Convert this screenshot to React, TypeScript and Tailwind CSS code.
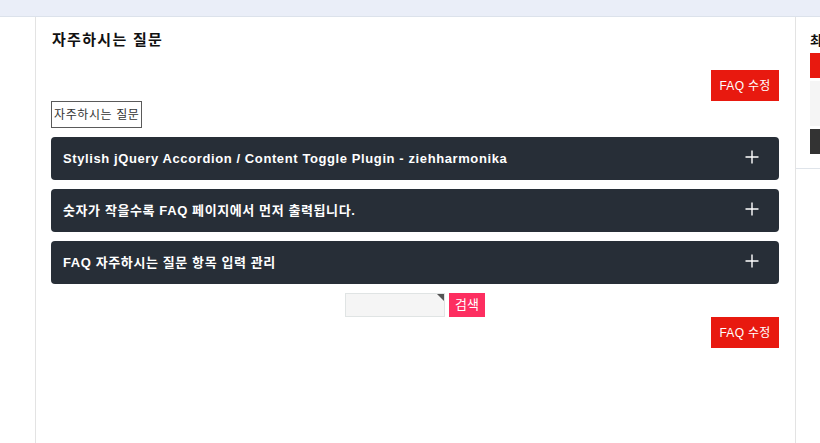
import React from 'react';

const faqs = [
  'Stylish jQuery Accordion / Content Toggle Plugin - ziehharmonika',
  '숫자가 작을수록 FAQ 페이지에서 먼저 출력됩니다.',
  'FAQ 자주하시는 질문 항목 입력 관리',
];

const font = { fontFamily: '"Liberation Sans", "Noto Sans CJK KR", sans-serif' };

function PlusIcon() {
  return (
    <svg width="14" height="14" viewBox="0 0 14 14" className="shrink-0">
      <path d="M7 0.5V13.5M0.5 7H13.5" stroke="#ffffff" strokeWidth="1.4" fill="none" />
    </svg>
  );
}

function EditButton() {
  return (
    <div className="flex justify-end">
      <button className="h-[31px] w-[68px] bg-[#e8190f] text-[12px] tracking-[0.3px] text-white">
        FAQ 수정
      </button>
    </div>
  );
}

export default function App() {
  return (
    <div className="flex min-h-screen flex-col bg-white text-[#111]" style={font}>
      {/* Top bar */}
      <div className="h-[17px] shrink-0 border-b border-[#dce2eb] bg-[#eaeef8]" />

      <div className="flex flex-1">
        {/* Left rail */}
        <div className="w-[36px] shrink-0 border-r border-[#e3e3e3]" />

        {/* Main */}
        <main className="w-[760px] shrink-0 border-r border-[#e3e3e3] px-[15px] pr-[16px] pt-[13px]">
          <h1 className="pl-[1px] text-[15px] font-bold leading-[20px] tracking-[1.3px] text-[#111]">
            자주하시는 질문
          </h1>

          <div className="mt-[20px]">
            <EditButton />
          </div>

          <div className="flex">
            <div className="flex h-[27px] items-center border border-[#5a5a5a] px-[2px] text-[12px] tracking-[0.6px] text-[#333]">
              자주하시는 질문
            </div>
          </div>

          {/* Accordion */}
          <div className="mt-[9px] flex flex-col gap-[9px]">
            {faqs.map((q) => (
              <div
                key={q}
                className="flex h-[43px] items-center justify-between rounded-[4px] bg-[#272e37] pl-[12px] pr-[20px]"
              >
                <span className="text-[13px] font-bold tracking-[0.6px] text-white">{q}</span>
                <span className="-mt-[4px]">
                  <PlusIcon />
                </span>
              </div>
            ))}
          </div>

          {/* Search */}
          <div className="mt-[9px] flex justify-center gap-[4px]">
            <div className="relative h-[24px] w-[100px] border border-[#e0e4e4] bg-[#f5f5f5]">
              <span className="absolute right-0 top-0 h-0 w-0 border-l-[7px] border-t-[7px] border-l-transparent border-t-[#555]" />
            </div>
            <button className="h-[24px] w-[36px] bg-[#fd2e60] text-[13px] text-white">검색</button>
          </div>

          <EditButton />
        </main>

        {/* Right sidebar */}
        <aside className="flex-1 overflow-hidden">
          <div className="pl-[14px] pt-[14px] pb-[14px]">
            <div className="whitespace-nowrap text-[13px] font-bold leading-[20px]">최근 게시물</div>
            <div className="mt-[2px] h-[25px] bg-[#e8190f]" />
            <div className="mt-[3px] h-[45px] bg-[#f5f5f5]" />
            <div className="mt-[3px] h-[25px] bg-[#333333]" />
          </div>
          <div className="border-t border-[#dfe4ea]" />
        </aside>
      </div>
    </div>
  );
}
